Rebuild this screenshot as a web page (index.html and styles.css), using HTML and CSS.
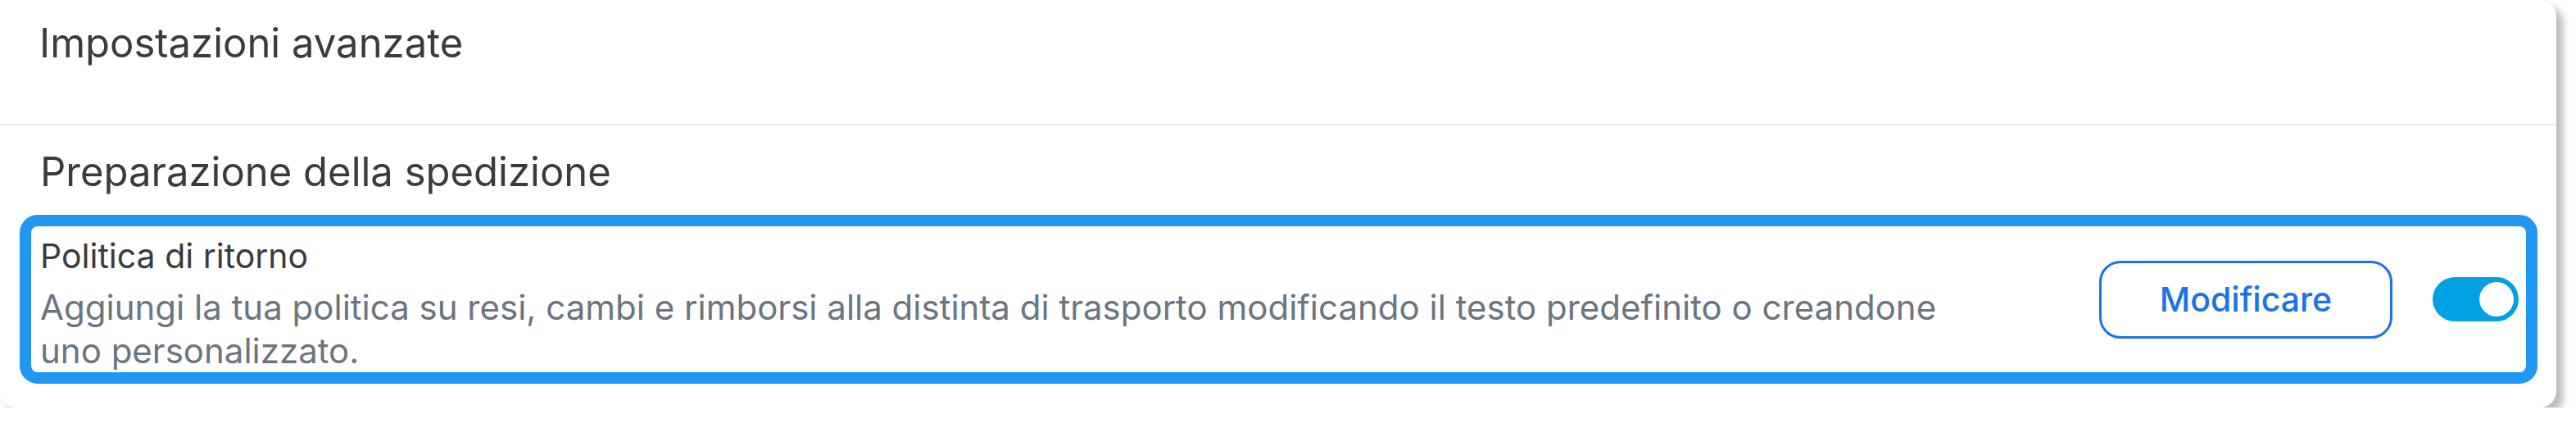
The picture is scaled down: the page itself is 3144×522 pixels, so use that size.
FILE: index.html
```html
<!DOCTYPE html>
<html lang="it">

<head>
  <meta charset="UTF-8">
  <meta name="viewport" content="width=device-width, initial-scale=1.0">
  <title>Impostazioni avanzate</title>
  <link rel="stylesheet" href="styles.css">
</head>

<body>
  <div class="card">
    <header class="card-head">
      <h1>Impostazioni avanzate</h1>
    </header>

    <section class="shipping">
      <h2>Preparazione della spedizione</h2>

      <div class="policy">
        <div class="policy-text">
          <h3>Politica di ritorno</h3>
          <p>Aggiungi la tua politica su resi, cambi e rimborsi alla distinta di trasporto modificando il testo predefinito o creandone uno personalizzato.</p>
        </div>
        <button class="edit-btn">Modificare</button>
        <label class="switch">
          <input type="checkbox" checked>
          <span class="slider"></span>
        </label>
      </div>
    </section>
  </div>
</body>

</html>
```

FILE: styles.css
```css
* {
  box-sizing: border-box;
  margin: 0;
  padding: 0;
  font-family: 'Inter', 'Noto Sans', sans-serif;
}

body {
  background: #fff;
  color: #3b3b3b;
}

.card {
  width: 3120px;
  height: 497px;
  background: #fff;
  border-radius: 20px;
  box-shadow: 8px 8px 10px rgba(0, 0, 0, 0.28);
}

.card-head {
  height: 153px;
  padding: 24px 48px 0;
  border-bottom: 2px solid #e8e8e8;
}

.card-head h1,
.shipping h2 {
  font-size: 49px;
  font-weight: 400;
  line-height: 58px;
  color: #3b3b3b;
}

.shipping {
  padding: 28px 23px 0 24px;
}

.shipping h2 {
  padding-left: 25px;
  margin-bottom: 23px;
}

.policy {
  display: flex;
  align-items: center;
  border: 14px solid #2196f3;
  border-radius: 22px;
  padding: 10px 9px 0 11px;
}

.policy-text {
  flex: 1;
}

.policy-text h3 {
  font-size: 41px;
  font-weight: 400;
  line-height: 53px;
  color: #3b3b3b;
  margin-bottom: 9px;
}

.policy-text p {
  font-size: 42px;
  line-height: 53px;
  color: #6b7580;
  max-width: 2350px;
}

.edit-btn {
  width: 358px;
  height: 95px;
  margin-right: 49px;
  margin-top: -10px;
  background: #fff;
  border: 3px solid #1a73e8;
  border-radius: 26px;
  color: #1a73e8;
  font-size: 41px;
  font-weight: 500;
  cursor: pointer;
}

.switch {
  position: relative;
  display: inline-block;
  width: 105px;
  height: 54px;
  margin-top: -10px;
}

.switch input {
  display: none;
}

.slider {
  position: absolute;
  inset: 0;
  background: #00a0e3;
  border-radius: 27px;
  cursor: pointer;
}

.slider::before {
  content: '';
  position: absolute;
  top: 6px;
  right: 6px;
  width: 42px;
  height: 42px;
  border-radius: 50%;
  background: #fff;
}
```
